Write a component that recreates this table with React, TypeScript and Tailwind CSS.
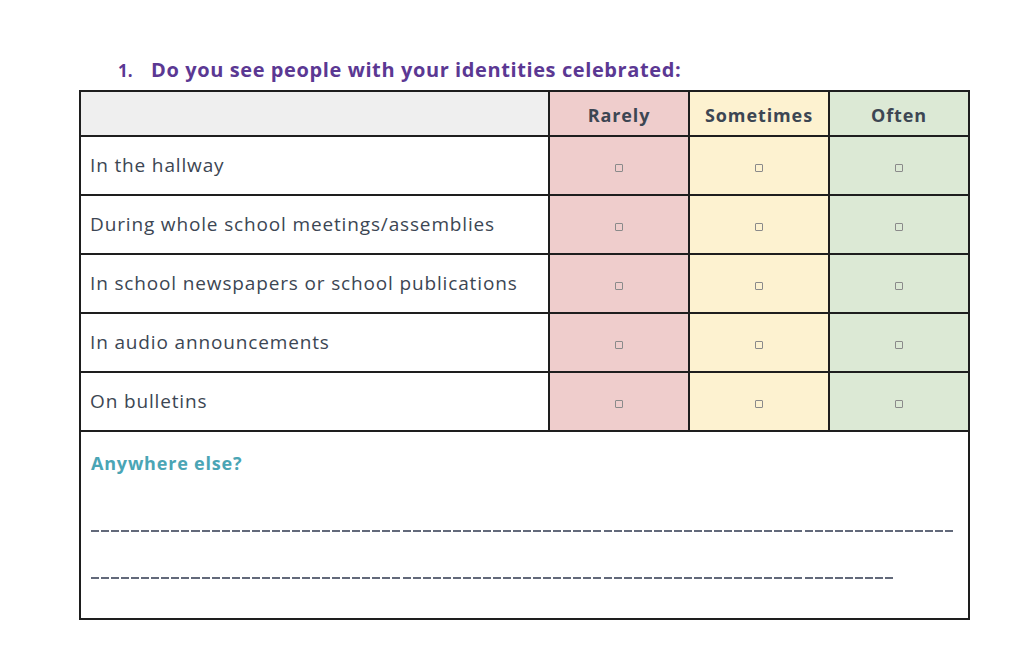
import React from "react";

const rows = [
  "In the hallway",
  "During whole school meetings/assemblies",
  "In school newspapers or school publications",
  "In audio announcements",
  "On bulletins",
];

function Box() {
  return <span className="inline-block w-[8px] h-[8px] border border-[#8a8a8a] rounded-[1px]" />;
}

export default function App() {
  return (
    <div className="w-[1024px] h-[662px] bg-white overflow-hidden" style={{ fontFamily: "'Open Sans', Lato, sans-serif" }}>
      <div className="pt-[56px] pl-[118px] flex items-baseline text-[#5b3893] font-bold leading-[28px]">
        <span className="w-[33px] text-[17px]">1.</span>
        <span className="text-[20px] tracking-[0.6px]">Do you see people with your identities celebrated:</span>
      </div>
      <table className="ml-[79px] mt-[5px] w-[889px] table-fixed border-collapse border-2 border-[#1e1e1e] text-[#3c4653]">
        <colgroup>
          <col className="w-[469px]" />
          <col className="w-[140px]" />
          <col className="w-[140px]" />
          <col className="w-[140px]" />
        </colgroup>
        <thead>
          <tr className="h-[45px] text-[18px] font-bold tracking-[0.9px]">
            <th className="border-2 border-[#1e1e1e] bg-[#efefef]"></th>
            <th className="border-2 border-[#1e1e1e] bg-[#efcdcc] font-bold pt-[3px]">Rarely</th>
            <th className="border-2 border-[#1e1e1e] bg-[#fdf2d0] font-bold pt-[3px]">Sometimes</th>
            <th className="border-2 border-[#1e1e1e] bg-[#dce9d5] font-bold pt-[3px]">Often</th>
          </tr>
        </thead>
        <tbody>
          {rows.map((r) => (
            <tr key={r} className="h-[59px] text-[19px]">
              <td className="border-2 border-[#1e1e1e] pl-[9px] text-left tracking-[0.85px]">{r}</td>
              <td className="border-2 border-[#1e1e1e] bg-[#efcdcc] text-center leading-none"><Box /></td>
              <td className="border-2 border-[#1e1e1e] bg-[#fdf2d0] text-center leading-none"><Box /></td>
              <td className="border-2 border-[#1e1e1e] bg-[#dce9d5] text-center leading-none"><Box /></td>
            </tr>
          ))}
          <tr className="h-[188px]">
            <td colSpan={4} className="border-2 border-[#1e1e1e] align-top pl-[10px]">
              <div className="pt-[19px] text-[18px] font-bold text-[#4aa5b5] leading-[24px] tracking-[0.8px]">Anywhere else?</div>
              <div className="mt-[55px] h-[2px] w-[862px] bg-[repeating-linear-gradient(to_right,#62697a_0_8px,transparent_8px_10.05px)]" />
              <div className="mt-[45px] h-[2px] w-[802px] bg-[repeating-linear-gradient(to_right,#62697a_0_8px,transparent_8px_10.05px)]" />
            </td>
          </tr>
        </tbody>
      </table>
    </div>
  );
}
